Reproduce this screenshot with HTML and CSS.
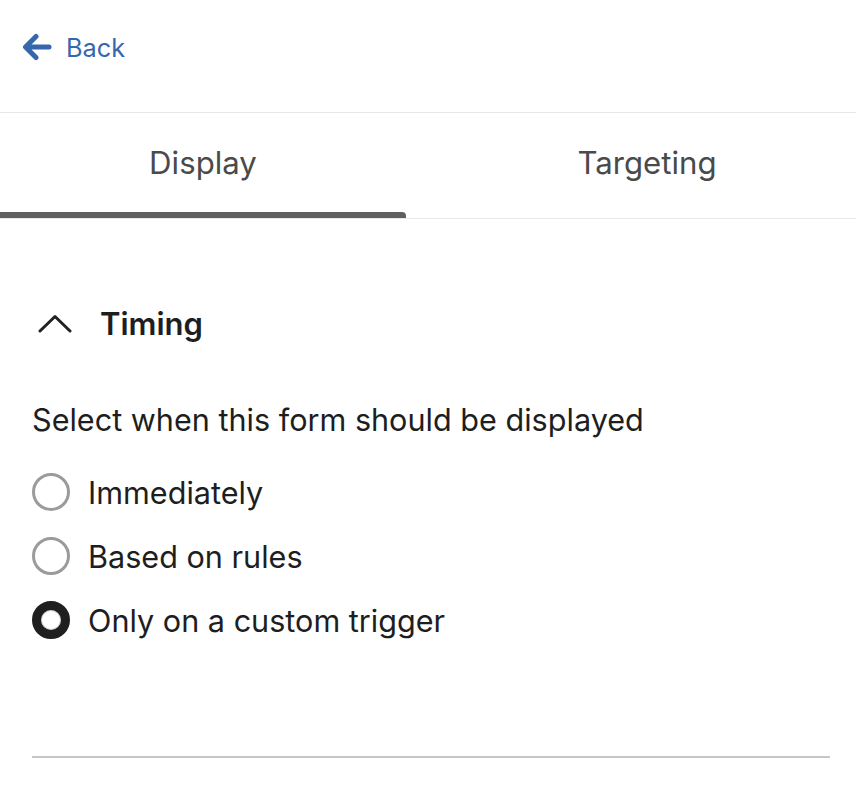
FILE: index.html
```html
<!DOCTYPE html>
<html>
<head>
<meta charset="utf-8">
<link rel="stylesheet" href="styles.css">
</head>
<body>
<header class="top">
  <a class="back" href="#">
    <svg class="back-icon" width="30" height="30" viewBox="0 0 30 30" aria-hidden="true">
      <path d="M27 15H4M14 4.5L3.5 15L14 25.5" fill="none" stroke="#3567ad" stroke-width="5" stroke-linecap="round" stroke-linejoin="round"/>
    </svg>
    <span>Back</span>
  </a>
</header>
<nav class="tabs">
  <div class="tab active">Display</div>
  <div class="tab">Targeting</div>
</nav>
<main class="content">
  <div class="section-head">
    <svg class="chev" width="36" height="20" viewBox="0 0 36 20" aria-hidden="true">
      <path d="M3 18L18 3.5L33 18" fill="none" stroke="#222" stroke-width="3" stroke-linecap="round" stroke-linejoin="round"/>
    </svg>
    <h2>Timing</h2>
  </div>
  <p class="desc">Select when this form should be displayed</p>
  <div class="options">
    <label class="opt"><span class="radio"></span><span>Immediately</span></label>
    <label class="opt"><span class="radio"></span><span>Based on rules</span></label>
    <label class="opt"><span class="radio checked"></span><span>Only on a custom trigger</span></label>
  </div>
  <hr class="rule">
</main>
</body>
</html>
```
FILE: styles.css
```css
* { box-sizing: border-box; }
html, body { margin: 0; padding: 0; background: #fff; }
body {
  font-family: Inter, "Noto Sans", sans-serif;
  color: #222;
  width: 856px;
  height: 790px;
  overflow: hidden;
}
.top {
  height: 112px;
  display: flex;
  align-items: center;
  padding-left: 22px;
  padding-bottom: 18px;
}
.back {
  display: flex;
  align-items: center;
  gap: 14px;
  color: #3567ad;
  text-decoration: none;
  font-size: 25.3px;
}
.back-icon { display: block; }
.tabs {
  display: grid;
  grid-template-columns: 406px 1fr;
  column-gap: 32px;
  border-top: 1px solid #e8e8e8;
  border-bottom: 1px solid #e8e8e8;
  height: 107px;
}
.tab {
  display: flex;
  align-items: center;
  justify-content: center;
  font-size: 31.2px;
  color: #4a4a4a;
  padding-bottom: 6px;
  position: relative;
}
.tab.active::after {
  content: "";
  position: absolute;
  left: 0;
  right: 0;
  bottom: 0;
  height: 6px;
  background: #5f6062;
  border-top-right-radius: 4px;
}
.content {
  padding: 0 26px 0 32px;
}
.section-head {
  display: flex;
  align-items: center;
  height: 40px;
  margin-top: 84px;
  gap: 27px;
  padding-left: 5px;
}
.chev { display: block; }
.section-head h2 {
  margin: 0;
  font-size: 31px;
  font-weight: 600;
  color: #1e1e1e;
}
.desc {
  margin: 59px 0 0 0;
  font-size: 30.6px;
  line-height: 36px;
  color: #1e1e1e;
}
.options {
  margin-top: 22px;
  display: flex;
  flex-direction: column;
}
.opt {
  height: 64px;
  display: flex;
  align-items: center;
  gap: 18px;
  font-size: 30.6px;
  color: #1e1e1e;
}
.radio {
  width: 38px;
  height: 38px;
  border-radius: 50%;
  border: 3px solid #9b9b9b;
  flex: none;
  background: #fff;
}
.radio.checked {
  border: 9px solid #1f1f1f;
  box-shadow: inset 0 0 0 1px #d0d0d0;
}
.rule {
  margin: 104px 0 0 0;
  border: 0;
  height: 2px;
  background: #c6c6c8;
}
```
